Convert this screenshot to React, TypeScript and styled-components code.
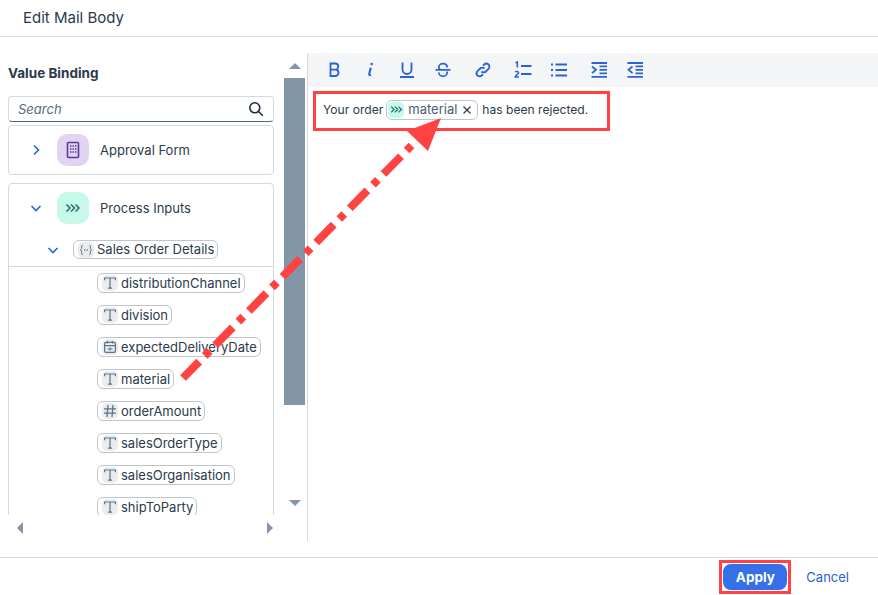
import React from 'react';
import styled, { createGlobalStyle } from 'styled-components';

const GlobalStyle = createGlobalStyle`
  html, body {
    margin: 0;
    height: 100%;
    background: #fff;
  }
  body {
    font-family: 'Inter', 'Noto Sans', sans-serif;
    color: #1d2d3e;
    overflow: hidden;
  }
  #root { height: 100%; }
`;

const Dialog = styled.div`
  position: relative;
  width: 878px;
  height: 595px;
  display: flex;
  flex-direction: column;
  overflow: hidden;
`;

const Header = styled.header`
  height: 37px;
  flex: none;
  display: flex;
  align-items: center;
  padding: 0 0 1px 23px;
  box-sizing: border-box;
  border-bottom: 1px solid #d9d9d9;
  font-size: 15px;
  color: #2b3a4b;
`;

const Main = styled.main`
  flex: none;
  height: 488px;
  margin-top: 16px;
  display: flex;
`;

const LeftPane = styled.div`
  width: 308px;
  flex: none;
  display: flex;
  box-sizing: border-box;
  border-right: 1px solid #d9d9d9;
`;

const LeftColumn = styled.div`
  width: 276px;
  margin-left: 8px;
  flex: none;
  display: flex;
  flex-direction: column;
`;

const PaneTitle = styled.h2`
  margin: 12px 0 15px;
  height: 16px;
  line-height: 16px;
  font-size: 13.5px;
  font-weight: 700;
  color: #2b3a4b;
`;

const SearchBox = styled.div`
  height: 26px;
  width: 266px;
  box-sizing: border-box;
  display: flex;
  align-items: center;
  justify-content: space-between;
  padding: 0 9px 0 9px;
  border: 1px solid #d5dadd;
  border-bottom-color: #556b82;
  border-radius: 4px;
  font-size: 13px;
  font-style: italic;
  color: #556b82;
`;

const Tree = styled.div`
  margin-top: 3px;
  width: 266px;
  height: 390px;
  overflow: hidden;
  display: flex;
  flex-direction: column;
  gap: 8px;
`;

const Card = styled.div<{ $open?: boolean }>`
  flex: none;
  box-sizing: border-box;
  border: 1px solid #d5d8dc;
  border-radius: 4px;
  ${p => (p.$open ? 'height: 400px;' : 'height: 50px;')}
`;

const CardRow = styled.div`
  display: flex;
  align-items: center;
  padding-top: 8px;
  font-size: 13px;
  color: #2b3a4b;
`;

const Chevron = styled.span`
  width: 12px;
  height: 12px;
  margin-left: 21px;
  margin-right: 15px;
  display: flex;
  color: #2a62d8;
`;

const Tile = styled.span<{ $bg: string }>`
  width: 32px;
  height: 32px;
  border-radius: 10px;
  background: ${p => p.$bg};
  display: flex;
  align-items: center;
  justify-content: center;
  margin-right: 11px;
`;

const GroupRow = styled.div`
  display: flex;
  align-items: center;
  height: 19px;
  margin-top: 16px;
  padding-bottom: 7px;
  border-bottom: 1px solid #d5d8dc;
`;

const GroupChevron = styled(Chevron)`
  margin-left: 38px;
  margin-right: 14px;
`;

const Token = styled.span<{ $h?: number }>`
  display: inline-flex;
  align-items: center;
  box-sizing: border-box;
  height: ${p => p.$h ?? 20}px;
  padding: 0 3px 0 4px;
  gap: 3px;
  border: 1px solid #bec5cd;
  border-radius: 6px;
  font-size: 13px;
  line-height: 1;
  color: #2b3a4b;
  white-space: nowrap;
  background: #fff;
`;

const TokenIcon = styled.span<{ $bg?: string }>`
  width: 16px;
  height: 16px;
  border-radius: 5px;
  background: ${p => p.$bg ?? '#eaecee'};
  display: flex;
  align-items: center;
  justify-content: center;
  flex: none;
`;

const FieldList = styled.div`
  display: flex;
  flex-direction: column;
  align-items: flex-start;
  gap: 12px;
  padding: 6px 0 0 88px;
`;

const ScrollBar = styled.div`
  width: 21px;
  flex: none;
  display: flex;
  flex-direction: column;
  align-items: center;
`;

const Thumb = styled.div`
  width: 21px;
  height: 327px;
  flex: none;
  background: #8396a8;
`;

const ArrowSlot = styled.div<{ $h: number; $align: string }>`
  height: ${p => p.$h}px;
  flex: none;
  display: flex;
  justify-content: center;
  align-items: ${p => p.$align};
`;

const HorizontalScroll = styled.div`
  height: 26px;
  width: 268px;
  display: flex;
  align-items: center;
  justify-content: space-between;
  padding: 0 0 0 6px;
  box-sizing: border-box;
`;

const RightPane = styled.div`
  flex: 1;
  display: flex;
  flex-direction: column;
  align-items: flex-start;
`;

const Toolbar = styled.div`
  width: 100%;
  height: 34px;
  background: #f4f5f7;
  display: flex;
  align-items: center;
  padding-left: 9px;
  box-sizing: border-box;
`;

const ToolButton = styled.span<{ $extra?: boolean }>`
  width: 36px;
  height: 34px;
  margin-left: ${p => (p.$extra ? 4 : 0)}px;
  display: flex;
  align-items: center;
  justify-content: center;
  color: #2a62d8;
`;

const RedFrame = styled.div`
  border: 3px solid #ff4242;
  box-sizing: border-box;
`;

const EditorLine = styled(RedFrame)`
  margin: 4px 0 0 5px;
  width: 297px;
  height: 40px;
  display: flex;
  align-items: center;
  gap: 3px;
  padding: 0 0 3px 7px;
  font-size: 12.1px;
  color: #2b3a4b;
  white-space: nowrap;
`;

const MailToken = styled(Token)`
  gap: 4px;
  padding: 0 5px 0 1px;
  margin-right: 1px;
  color: #475e75;
`;

const RemoveIcon = styled.svg`
  margin-left: 1px;
  flex: none;
`;

const Footer = styled.footer`
  position: absolute;
  left: 0;
  right: 0;
  bottom: 0;
  height: 38px;
  border-top: 1px solid #d9d9d9;
  display: flex;
  align-items: center;
  justify-content: flex-end;
  padding-right: 29px;
  box-sizing: border-box;
`;

const ApplyFrame = styled(RedFrame)`
  width: 72px;
  height: 34px;
  padding: 1px;
  margin-right: 15px;
  margin-top: 1px;
`;

const ApplyButton = styled.button`
  display: block;
  width: 100%;
  height: 100%;
  border: 0;
  border-radius: 8px;
  background: #3670e8;
  color: #fff;
  font: 700 13.5px 'Inter', 'Noto Sans', sans-serif;
  padding: 0;
`;

const CancelLink = styled.span`
  font-size: 13px;
  color: #2a62d8;
`;

const Annotation = styled.svg`
  position: absolute;
  left: 0;
  top: 0;
  pointer-events: none;
`;

const ChevronRight = () => (
  <svg width="12" height="12" viewBox="0 0 12 12" fill="none" stroke="currentColor" strokeWidth="1.6">
    <path d="M4 1.5 8.5 6 4 10.5" />
  </svg>
);

const ChevronDown = () => (
  <svg width="12" height="12" viewBox="0 0 12 12" fill="none" stroke="currentColor" strokeWidth="1.6">
    <path d="M1.5 4 6 8.5 10.5 4" />
  </svg>
);

const Triangle = ({ dir }: { dir: 'up' | 'down' | 'left' | 'right' }) => {
  const points = {
    up: '0,9 12,9 6,3',
    down: '0,3 12,3 6,9',
    left: '9,0 9,12 3,6',
    right: '3,0 3,12 9,6',
  }[dir];
  return (
    <svg width="12" height="12" viewBox="0 0 12 12" fill="#8396a8">
      <polygon points={points} />
    </svg>
  );
};

const FormIcon = () => (
  <svg width="16" height="18" viewBox="0 0 16 18" fill="none" stroke="#5b3a9e">
    <rect x="2.5" y="1.5" width="11" height="15" rx="1" strokeWidth="1.6" />
    <path d="M5 5h1.5M7.5 5H9M10 5h1.5M5 8h1.5M7.5 8H9M10 8h1.5M5 11h1.5M7.5 11H9M10 11h1.5" strokeWidth="1.4" />
  </svg>
);

const ProcessIcon = ({ size = 16, color = '#1f6f6a' }: { size?: number; color?: string }) => (
  <svg width={size} height={size} viewBox="0 0 16 16" fill="none" stroke={color} strokeWidth="1.5">
    <path d="M1.5 4.5 5 8l-3.500 3.500M6 4.500 9.500 8 6 11.500M10.500 4.500 14 8l-3.500 3.500" />
  </svg>
);

const BracesIcon = () => (
  <svg width="14" height="14" viewBox="0 0 14 14" fill="none" stroke="#5b738b" strokeWidth="1">
    <path d="M4 2.500H3.400c-.6 0-.8.4-.8.9v2.300L1.500 7l1.100 1.300v2.300c0 .5.2.9.8.9H4M10 2.500h.6c.6 0 .8.4.8.9v2.300L12.500 7l-1.100 1.300v2.300c0 .5-.2.9-.8.9H10" />
    <path d="M5.200 7h1.200M7.600 7h1.200" strokeWidth="1.300" />
  </svg>
);

const TextIcon = () => (
  <svg width="14" height="14" viewBox="0 0 14 14" fill="none" stroke="#5b738b" strokeWidth="1.2">
    <path d="M1.600 4.200V2h10.800v2.200M7 2v10M5 12.200h4" />
  </svg>
);

const CalendarIcon = () => (
  <svg width="14" height="14" viewBox="0 0 14 14" fill="none" stroke="#5b738b" strokeWidth="1.2">
    <rect x="1.600" y="2.400" width="10.800" height="10" rx="1.400" />
    <path d="M1.600 5.600h10.800M4.400 1v2.600M9.600 1v2.600M4.500 9h5M7 7.600v2.800" />
  </svg>
);

const HashIcon = () => (
  <svg width="14" height="14" viewBox="0 0 14 14" fill="none" stroke="#5b738b" strokeWidth="1.300">
    <path d="M5 1 4 13M10 1 9 13M1 4.800h12M1 9.200h12" />
  </svg>
);

const SearchIcon = () => (
  <svg width="16" height="16" viewBox="0 0 16 16" fill="none" stroke="#1d2d3e" strokeWidth="1.600">
    <circle cx="6.800" cy="6.800" r="5" />
    <path d="m10.500 10.500 4.300 4.300" />
  </svg>
);

const toolPaths: Record<string, React.ReactNode> = {
  bold: <path d="M4.500 2.500h4.700a3 3 0 0 1 0 6.200H4.500zM4.500 8.700h5.400a3.200 3.200 0 0 1 0 6.300H4.500z" />,
  italic: (
    <>
      <path d="M8.800 6.800 7.200 13c-.2.900.4 1.400 1.600.6" strokeWidth="2.100" />
      <circle cx="9.700" cy="3" r="1.300" fill="currentColor" stroke="none" />
    </>
  ),
  underline: <path d="M4.500 1.500v7a4.500 4.500 0 0 0 9 0v-7M2 16h14" />,
  strike: <path d="M13.200 6.500c0-2.500-2-3.800-4.200-3.800S4.800 4 4.800 6c0 .9.400 1.800 1.200 2.500M13.200 10.500v1c0 2.100-2 3.800-4.200 3.800s-4.200-1.700-4.200-3.800M1.500 8.800h15" />,
  link: <path d="M7.500 10.500a3 3 0 0 0 4.300 0l2.700-2.700a3 3 0 0 0-4.300-4.300L9 4.700M10.500 7.500a3 3 0 0 0-4.300 0l-2.700 2.700a3 3 0 0 0 4.300 4.300L9 13.300" />,
  ordered: (
    <>
      <path d="M7 5h10.500M7 13h10.500" strokeWidth="2" />
      <path d="M1.500 1.800 3.300 1v5.500M1.200 11c.7-.9 3.400-.9 3.400.8 0 1.500-3.400 2.200-3.400 4.200h3.700" strokeWidth="1.500" />
    </>
  ),
  bullet: <path d="M5.500 3.500h11.500M5.500 9h11.500M5.500 14.500h11.500M1 3.500h2M1 9h2M1 14.500h2" strokeWidth="2" />,
  indent: (
    <>
      <path d="M1.500 2h15.500M9.500 5.300h7.500M9.500 8.800h7.500M9.500 12.300h7.500M1.500 15.800h15.500" />
      <path d="M2 5.500 6 8.800l-4 3.300" />
    </>
  ),
  outdent: (
    <>
      <path d="M1.500 2h15.500M9.500 5.300h7.500M9.500 8.800h7.500M9.500 12.300h7.500M1.500 15.800h15.500" />
      <path d="M6.500 5.500 2.500 8.800l4 3.300" />
    </>
  ),
};

const ToolIcon = ({ name }: { name: string }) => (
  <svg width="18" height="18" viewBox="0 0 18 18" fill="none" stroke="currentColor" strokeWidth="1.800">
    {toolPaths[name]}
  </svg>
);

const tools = [
  { name: 'bold' },
  { name: 'italic' },
  { name: 'underline' },
  { name: 'strike' },
  { name: 'link', extra: true },
  { name: 'ordered', extra: true },
  { name: 'bullet' },
  { name: 'indent', extra: true },
  { name: 'outdent' },
];

const fields = [
  { label: 'distributionChannel', icon: <TextIcon /> },
  { label: 'division', icon: <TextIcon /> },
  { label: 'expectedDeliveryDate', icon: <CalendarIcon /> },
  { label: 'material', icon: <TextIcon /> },
  { label: 'orderAmount', icon: <HashIcon /> },
  { label: 'salesOrderType', icon: <TextIcon /> },
  { label: 'salesOrganisation', icon: <TextIcon /> },
  { label: 'shipToParty', icon: <TextIcon /> },
];

const App: React.FC = () => {
  return (
    <Dialog>
      <GlobalStyle />
      <Header>Edit Mail Body</Header>

      <Main>
        <LeftPane>
          <LeftColumn>
            <PaneTitle>Value Binding</PaneTitle>
            <SearchBox>
              Search
              <SearchIcon />
            </SearchBox>
            <Tree>
              <Card>
                <CardRow>
                  <Chevron>
                    <ChevronRight />
                  </Chevron>
                  <Tile $bg="#e2d3f0">
                    <FormIcon />
                  </Tile>
                  Approval Form
                </CardRow>
              </Card>
              <Card $open>
                <CardRow>
                  <Chevron>
                    <ChevronDown />
                  </Chevron>
                  <Tile $bg="#c6f9ec">
                    <ProcessIcon />
                  </Tile>
                  Process Inputs
                </CardRow>
                <GroupRow>
                  <GroupChevron>
                    <ChevronDown />
                  </GroupChevron>
                  <Token $h={19}>
                    <TokenIcon>
                      <BracesIcon />
                    </TokenIcon>
                    Sales Order Details
                  </Token>
                </GroupRow>
                <FieldList>
                  {fields.map(f => (
                    <Token key={f.label}>
                      <TokenIcon>{f.icon}</TokenIcon>
                      {f.label}
                    </Token>
                  ))}
                </FieldList>
              </Card>
            </Tree>
            <HorizontalScroll>
              <Triangle dir="left" />
              <Triangle dir="right" />
            </HorizontalScroll>
          </LeftColumn>
          <ScrollBar>
            <ArrowSlot $h={25} $align="center">
              <Triangle dir="up" />
            </ArrowSlot>
            <Thumb />
            <ArrowSlot $h={104} $align="flex-end">
              <Triangle dir="down" />
            </ArrowSlot>
          </ScrollBar>
        </LeftPane>

        <RightPane>
          <Toolbar>
            {tools.map(t => (
              <ToolButton key={t.name} $extra={t.extra}>
                <ToolIcon name={t.name} />
              </ToolButton>
            ))}
          </Toolbar>
          <EditorLine>
            Your order
            <MailToken>
              <TokenIcon $bg="#c6f9ec">
                <ProcessIcon size={13} />
              </TokenIcon>
              material
              <RemoveIcon width="10" height="10" viewBox="0 0 10 10" stroke="#2b3a4b" strokeWidth="1.200">
                <path d="m1.500 1.500 7 7M8.500 1.500l-7 7" />
              </RemoveIcon>
            </MailToken>
            has been rejected.
          </EditorLine>
        </RightPane>
      </Main>

      <Footer>
        <ApplyFrame>
          <ApplyButton>Apply</ApplyButton>
        </ApplyFrame>
        <CancelLink>Cancel</CancelLink>
      </Footer>

      <Annotation width="878" height="595" viewBox="0 0 878 595">
        <line x1="183" y1="378" x2="412" y2="145" stroke="#ff4242" strokeWidth="8" strokeDasharray="25 8 7 8" strokeDashoffset="2" />
        <polygon points="441,118 407,131 428,151" fill="#ff4242" />
      </Annotation>
    </Dialog>
  );
};

export default App;
